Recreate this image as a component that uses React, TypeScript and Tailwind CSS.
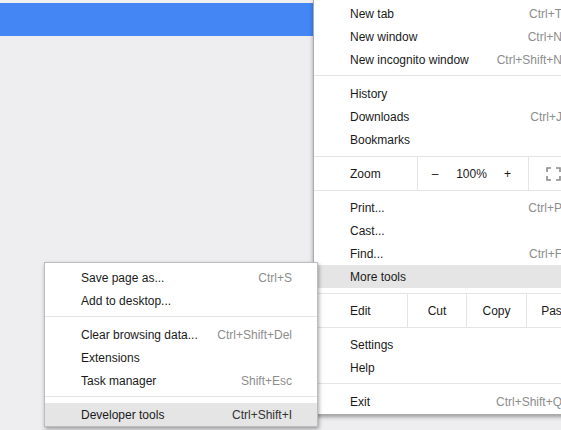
import React from 'react';

type ItemProps = { label: string; shortcut?: string; active?: boolean };

// One row of a menu: label on the left, keyboard shortcut pushed to the right
const Item = ({ label, shortcut, active }: ItemProps) => (
  <div
    className={`flex h-[23px] items-center justify-between pl-[36px] pr-[25px] ${
      active ? 'bg-[#e5e5e5]' : ''
    }`}
  >
    <span className="text-[#1a1a1a]">{label}</span>
    {shortcut && (
      <span className={active ? 'text-[#333333]' : 'text-[#8d8d8d]'}>{shortcut}</span>
    )}
  </div>
);

const Separator = () => <div className="mt-[4px] mb-[6px] h-px bg-[#e4e4e4]" />;

const FullscreenIcon = () => (
  <svg width="15" height="14" viewBox="0 0 15 14" fill="none" stroke="#8a8a8a" strokeWidth="1.6">
    <path d="M1 5V1h4" />
    <path d="M10 1h4v4" />
    <path d="M14 9v4h-4" />
    <path d="M5 13H1V9" />
  </svg>
);

export default function App() {
  return (
    <div className="relative h-[430px] w-[561px] overflow-hidden bg-[#eeedef] font-['Segoe_UI','Liberation_Sans',Arial,sans-serif] text-[12px] leading-none">
      {/* page behind the menus */}
      <div className="h-[3px] bg-[#f0f0ee]" />
      <div className="h-[33px] bg-[#4486f4]" />

      {/* main Chrome menu */}
      <div className="absolute left-[313px] top-0 w-[274px] border-l border-b border-[#ababab] bg-white pt-[2px] pb-[1px] shadow-[0_2px_4px_rgba(0,0,0,0.35)]">
        <Item label="New tab" shortcut="Ctrl+T" />
        <Item label="New window" shortcut="Ctrl+N" />
        <Item label="New incognito window" shortcut="Ctrl+Shift+N" />
        <Separator />
        <Item label="History" />
        <Item label="Downloads" shortcut="Ctrl+J" />
        <Item label="Bookmarks" />

        <div className="mt-[5px] flex h-[35px] border-y border-[#e4e4e4]">
          <div className="flex w-[103px] items-center pl-[36px] text-[#1a1a1a]">Zoom</div>
          <div className="flex w-[111px] items-center border-l border-[#e4e4e4] text-[#1a1a1a]">
            <span className="w-[34px] text-center">–</span>
            <span className="w-[39px] text-center">100%</span>
            <span className="w-[33px] text-center">+</span>
          </div>
          <div className="flex flex-1 items-center border-l border-[#e4e4e4] pl-[17px]">
            <FullscreenIcon />
          </div>
        </div>

        <div className="mt-[5px]">
          <Item label="Print..." shortcut="Ctrl+P" />
          <Item label="Cast..." />
          <Item label="Find..." shortcut="Ctrl+F" />
          <Item label="More tools" active />
        </div>

        <div className="mt-[5px] flex h-[35px] border-y border-[#e4e4e4] text-[#1a1a1a]">
          <div className="flex w-[93px] items-center pl-[36px]">Edit</div>
          <div className="flex w-[59px] items-center justify-center border-l border-[#e4e4e4]">Cut</div>
          <div className="flex w-[60px] items-center justify-center border-l border-[#e4e4e4]">Copy</div>
          <div className="flex w-[60px] items-center justify-center border-l border-[#e4e4e4]">Paste</div>
        </div>

        <div className="mt-[5px]">
          <Item label="Settings" />
          <Item label="Help" />
        </div>
        <Separator />
        <Item label="Exit" shortcut="Ctrl+Shift+Q" />
      </div>

      {/* "More tools" submenu */}
      <div className="absolute left-[44px] top-[262px] w-[274px] border border-[#bcbcbc] bg-white pt-[3px] shadow-[1px_2px_4px_rgba(0,0,0,0.35)]">
        <Item label="Save page as..." shortcut="Ctrl+S" />
        <Item label="Add to desktop..." />
        <Separator />
        <Item label="Clear browsing data..." shortcut="Ctrl+Shift+Del" />
        <Item label="Extensions" />
        <Item label="Task manager" shortcut="Shift+Esc" />
        <Separator />
        <Item label="Developer tools" shortcut="Ctrl+Shift+I" active />
      </div>
    </div>
  );
}
